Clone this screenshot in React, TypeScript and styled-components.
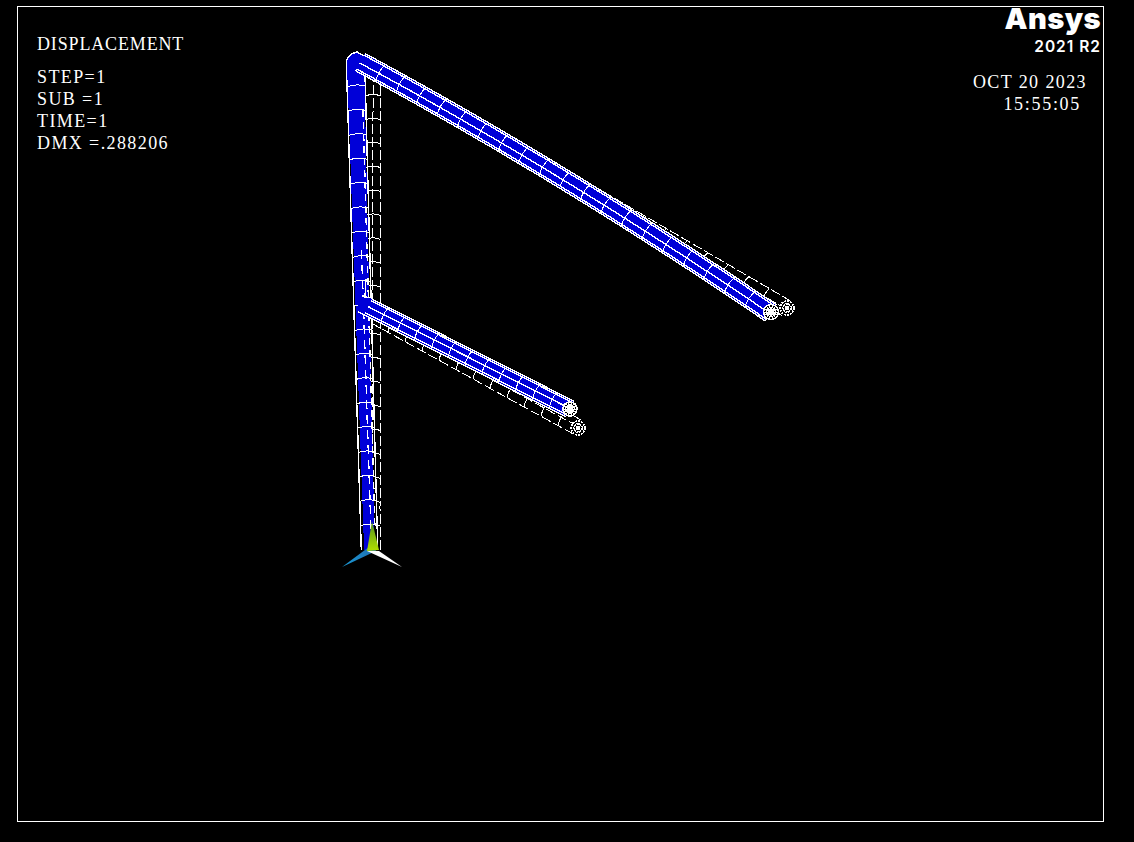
import React from "react";
import styled, { createGlobalStyle } from "styled-components";

const Global = createGlobalStyle`
  html, body { margin: 0; padding: 0; background: #000; }
  #root { width: 1134px; height: 842px; overflow: hidden; }
`;

const Page = styled.main`
  position: relative;
  width: 1134px;
  height: 842px;
  box-sizing: border-box;
  padding: 6px 30px 20px 17px;
  background: #000;
  color: #fff;
`;

const Frame = styled.section`
  box-sizing: border-box;
  height: 816px;
  border: 1px solid #fff;
  display: flex;
  justify-content: space-between;
  align-items: flex-start;
  padding: 0 2px 0 19px;
`;

const Readout = styled.div`
  display: flex;
  flex-direction: column;
  padding-top: 26px;
  font-family: "Liberation Serif", "Times New Roman", serif;
  font-size: 18px;
  letter-spacing: 0.85px;
  line-height: 22px;
`;

const Title = styled.div`
  margin-bottom: 11px;
`;

const StatLine = styled.div`
  white-space: pre;
  letter-spacing: 1.4px;
`;

const Side = styled.div`
  display: flex;
  flex-direction: column;
  align-items: flex-end;
`;

const Brand = styled.div`
  font-family: Inter, "Liberation Sans", sans-serif;
  font-weight: 900;
  font-size: 29px;
  line-height: 24px;
  margin-top: 0;
  letter-spacing: 0.4px;
`;

const Release = styled.div`
  font-family: Inter, "Liberation Sans", sans-serif;
  font-weight: 600;
  font-size: 15.5px;
  line-height: 20px;
  margin-top: 6px;
  letter-spacing: 1px;
`;

const Stamp = styled.div`
  display: flex;
  flex-direction: column;
  align-items: flex-end;
  margin: 14px 14px 0 0;
  font-family: "Liberation Serif", "Times New Roman", serif;
  font-size: 18px;
  line-height: 22px;
  letter-spacing: 1.4px;
`;

const Clock = styled.div`
  margin-right: 6px;
  letter-spacing: 1.7px;
`;

const Model = styled.svg`
  position: absolute;
  inset: 0;
  pointer-events: none;
  shape-rendering: crispEdges;
`;

type P = [number, number];
interface TubeSpec {
  at: (t: number) => P;
  r: (t: number) => number;
  fill?: (t: number) => number;
  rings: number;
  offsets: number[];
}

const lineAt = (a: P, b: P) => (t: number): P => [a[0] + (b[0] - a[0]) * t, a[1] + (b[1] - a[1]) * t];
const quadAt = (a: P, c: P, b: P) => (t: number): P => {
  const u = 1 - t;
  return [u * u * a[0] + 2 * u * t * c[0] + t * t * b[0], u * u * a[1] + 2 * u * t * c[1] + t * t * b[1]];
};

const normalAt = (s: TubeSpec, t: number): P => {
  const p = s.at(Math.max(0, t - 0.01));
  const q = s.at(Math.min(1, t + 0.01));
  const dx = q[0] - p[0];
  const dy = q[1] - p[1];
  const l = Math.hypot(dx, dy);
  return [dy / l, -dx / l];
};

const offsetPoint = (s: TubeSpec, t: number, k: number): P => {
  const c = s.at(t);
  const n = normalAt(s, t);
  return [c[0] + n[0] * k, c[1] + n[1] * k];
};

const fmt = (p: P) => `${p[0].toFixed(1)} ${p[1].toFixed(1)}`;
const STEPS = 24;

const blueOutline = (s: TubeSpec) => {
  const width = s.fill ?? s.r;
  const top: string[] = [];
  const bottom: string[] = [];
  for (let i = 0; i <= STEPS; i++) {
    const t = i / STEPS;
    top.push(fmt(offsetPoint(s, t, width(t))));
    bottom.unshift(fmt(offsetPoint(s, t, -width(t))));
  }
  return `M${top.join("L")}L${bottom.join("L")}Z`;
};

const longLines = (s: TubeSpec) =>
  s.offsets
    .map((k) => {
      const pts: string[] = [];
      for (let i = 0; i <= STEPS; i++) {
        const t = i / STEPS;
        pts.push(fmt(offsetPoint(s, t, k * s.r(t))));
      }
      return `M${pts.join("L")}`;
    })
    .join("");

const ringLines = (s: TubeSpec) => {
  let d = "";
  for (let i = 1; i < s.rings; i++) {
    const t = i / s.rings;
    const r = s.r(t);
    const a = offsetPoint(s, t, r);
    const b = offsetPoint(s, t, -r);
    const n = normalAt(s, t);
    const bow = 3;
    const c: P = [(a[0] + b[0]) / 2 + n[1] * bow, (a[1] + b[1]) / 2 - n[0] * bow];
    d += `M${fmt(a)}Q${fmt(c)} ${fmt(b)}`;
  }
  return d;
};

const constant = (v: number) => () => v;

const column: TubeSpec = {
  at: lineAt([355.5, 62], [369.5, 550]),
  r: (t) => 9.2 - 1 * t,
  fill: (t) => 8.6 - 3.2 * t,
  rings: 20,
  offsets: [-1, 1],
};
const columnCore: TubeSpec = {
  at: lineAt([361.5, 250], [371, 530]),
  r: constant(1),
  rings: 1,
  offsets: [0],
};
const columnSeam: TubeSpec = {
  at: lineAt([363, 110], [375, 530]),
  r: constant(1),
  rings: 1,
  offsets: [0],
};
const topArm: TubeSpec = {
  at: quadAt([360, 62], [564, 172], [771, 313]),
  r: constant(9.8),
  rings: 20,
  offsets: [-1, -0.8, -0.1, 0.8, 1],
};
const midArm: TubeSpec = {
  at: lineAt([368, 307], [570, 409]),
  r: constant(8.8),
  rings: 12,
  offsets: [-1, -0.75, 0.05, 0.8, 1],
};
const ghostColumn: TubeSpec = {
  at: lineAt([373, 72], [372.5, 550]),
  r: constant(7.5),
  rings: 20,
  offsets: [0, 1],
};
const ghostTop: TubeSpec = {
  at: lineAt([374, 68], [786, 308]),
  r: constant(8.4),
  rings: 20,
  offsets: [-1, -0.1, 1],
};
const ghostMid: TubeSpec = {
  at: lineAt([375, 316], [579, 428]),
  r: constant(8),
  rings: 12,
  offsets: [-1, 0.1, 1],
};

const capLines = (cx: number, cy: number, r: number) => {
  let d = "";
  for (let i = 0; i < 14; i++) {
    const a = (i / 14) * Math.PI * 2;
    d += `M${cx} ${cy}L${(cx + Math.cos(a) * r).toFixed(1)} ${(cy + Math.sin(a) * r).toFixed(1)}`;
  }
  return d;
};

const Ghost: React.FC<{ spec: TubeSpec }> = ({ spec }) => (
  <g fill="none" stroke="#fff" strokeWidth={1} strokeDasharray="10 3">
    <path d={longLines(spec)} />
    <path d={ringLines(spec)} strokeDasharray="none" />
  </g>
);

const Solid: React.FC<{ spec: TubeSpec }> = ({ spec }) => (
  <g>
    <path d={blueOutline(spec)} fill="#0000d8" />
    <path d={longLines(spec)} fill="none" stroke="#fff" strokeWidth={1.4} />
    <path d={ringLines(spec)} fill="none" stroke="#fff" strokeWidth={1} />
  </g>
);

const Cap: React.FC<{ x: number; y: number; r: number; dashed?: boolean }> = ({ x, y, r, dashed }) => (
  <g stroke="#fff" fill="none" strokeDasharray={dashed ? "2 1" : undefined}>
    <circle cx={x} cy={y} r={r} fill="#000" strokeWidth={1.6} />
    <circle cx={x} cy={y} r={r * 0.6} strokeWidth={1.2} />
    <circle cx={x} cy={y} r={r * 0.3} strokeWidth={1} />
    <path d={capLines(x, y, r)} strokeWidth={1} />
  </g>
);

const Wireframe: React.FC = () => (
  <Model width={1134} height={842} viewBox="0 0 1134 842">
    <defs>
      <linearGradient id="axisX" x1="372" y1="546" x2="343" y2="567" gradientUnits="userSpaceOnUse">
        <stop offset="0" stopColor="#1f6fb0" />
        <stop offset="1" stopColor="#1a9ad6" />
      </linearGradient>
      <linearGradient id="axisY" x1="372" y1="520" x2="372" y2="552" gradientUnits="userSpaceOnUse">
        <stop offset="0" stopColor="#4f8f20" />
        <stop offset="1" stopColor="#b4e000" />
      </linearGradient>
    </defs>
    <Ghost spec={ghostColumn} />
    <Ghost spec={ghostTop} />
    <Ghost spec={ghostMid} />
    <Cap x={787} y={308} r={7} dashed />
    <Cap x={578} y={428} r={7} dashed />
    <path
      d="M346.5 72L346.5 61Q348 54 357 52L372 60L365 74L364.5 82Z"
      fill="#0000d8"
      stroke="#fff"
      strokeWidth={1.4}
    />
    <Solid spec={column} />
    <path d={longLines(columnSeam)} fill="none" stroke="#fff" strokeWidth={1.4} strokeDasharray="7 5" />
    <path d={longLines(columnCore)} fill="none" stroke="#fff" strokeWidth={1.4} strokeDasharray="9 6" />
    <Solid spec={topArm} />
    <path d="M358 296L372 298L378 320L358 312Z" fill="#0000d8" />
    <path d="M366 279L365 297L372 298M358 312L378 321" fill="none" stroke="#fff" strokeWidth={1.4} />
    <Solid spec={midArm} />
    <Cap x={771} y={312} r={7.5} />
    <Cap x={570} y={409} r={7} />
    <g shapeRendering="geometricPrecision">
      <polygon points="373,544 376,551 342,567" fill="url(#axisX)" />
      <polygon points="367,551 379,551 402,567" fill="#fff" />
      <polygon points="372,521 379,550 367,551" fill="url(#axisY)" />
    </g>
  </Model>
);

export default function App() {
  return (
    <>
      <Global />
      <Page>
        <Frame>
          <Readout>
            <Title>DISPLACEMENT</Title>
            <StatLine>STEP=1</StatLine>
            <StatLine>SUB =1</StatLine>
            <StatLine>TIME=1</StatLine>
            <StatLine>DMX =.288206</StatLine>
          </Readout>
          <Side>
            <Brand>Ansys</Brand>
            <Release>2021 R2</Release>
            <Stamp>
              <div>OCT 20 2023</div>
              <Clock>15:55:05</Clock>
            </Stamp>
          </Side>
        </Frame>
        <Wireframe />
      </Page>
    </>
  );
}
